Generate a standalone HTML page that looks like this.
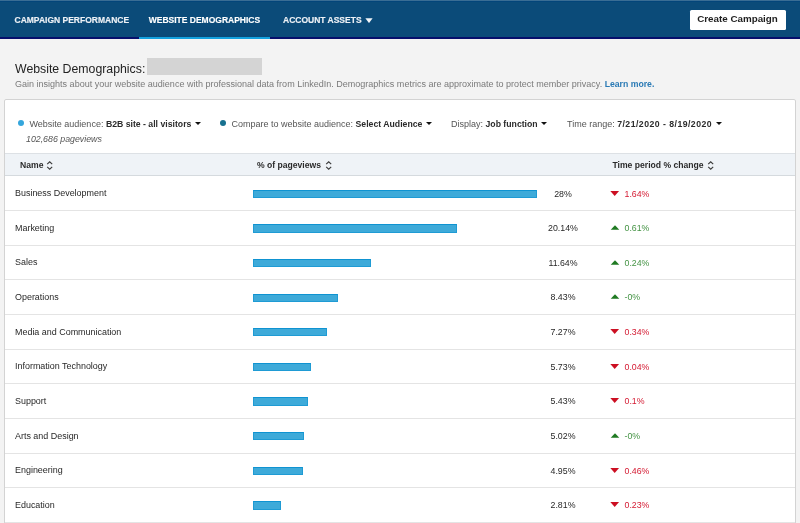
<!DOCTYPE html>
<html><head><meta charset="utf-8">
<style>
*{margin:0;padding:0;box-sizing:border-box}
html,body{width:800px;height:523px;overflow:hidden;background:#f3f3f3;-webkit-font-smoothing:antialiased;font-family:"Liberation Sans",sans-serif;color:#2b2b2b}
.nav{position:absolute;left:0;top:0;width:800px;height:39px;background:#0b4b79}
.nav .tl{position:absolute;left:0;top:0;width:800px;height:1px;background:#3a6d94}
.nav .tl2{position:absolute;left:0;top:1px;width:800px;height:1.2px;background:#03457a}
.nav .line{position:absolute;left:0;top:37.3px;width:800px;height:1.8px;background:#060f6c}
.nav .act{position:absolute;left:139px;top:37.1px;width:131px;height:2.2px;background:#14a2df}
.tab{position:absolute;top:15px;font-size:8.5px;font-weight:bold;color:#edf1f6;white-space:nowrap;letter-spacing:0;-webkit-text-stroke:0.15px currentColor}
.tri{display:inline-block;width:0;height:0;border-left:3.5px solid transparent;border-right:3.5px solid transparent;border-top:3.9px solid currentColor;vertical-align:middle;position:relative;top:-0.7px;margin-left:1.3px}
.dt{letter-spacing:0.47px}
.btn{position:absolute;left:689.5px;top:10px;width:96px;height:19.8px;background:#fff;border-radius:1.5px;font-size:9.8px;font-weight:bold;color:#1e1e1e;text-align:center;line-height:18.6px;white-space:nowrap}
.title{position:absolute;left:15px;top:61.5px;font-size:12.3px;color:#222;white-space:nowrap}
.gbox{position:absolute;left:147px;top:58.4px;width:115px;height:17px;background:#d4d4d4}
.sub{position:absolute;left:15px;top:79px;font-size:9.02px;color:#7a7a7a;white-space:nowrap}
.sub b{color:#2a7ab5;font-size:8.7px}
.card{position:absolute;left:4px;top:99px;width:792px;height:440px;background:#fff;border:1px solid #d3d3d3;border-radius:2px}
.f{position:absolute;top:118.5px;font-size:9px;color:#555;white-space:nowrap}
.f b{color:#2b2b2b;font-size:8.7px}
.dot{position:absolute;width:6.2px;height:6.2px;border-radius:50%}
.pv{position:absolute;left:26px;top:133.8px;font-size:8.8px;font-style:italic;color:#555;white-space:nowrap}
.th{position:absolute;left:5px;top:153px;width:790px;height:23px;background:#eff3f7;border-top:1px solid #dde1e5;border-bottom:1px solid #d5dade}
.h{position:absolute;top:160px;font-size:8.6px;font-weight:bold;color:#2b2b2b;white-space:nowrap}
.srt{position:absolute;top:160.4px}
.row{position:absolute;left:5px;width:790px;height:34.64px;border-bottom:1.5px solid #e4e4e4}
.nm{position:absolute;left:10px;top:11.7px;font-size:8.95px;color:#282828;white-space:nowrap}
.bar{position:absolute;left:247.8px;top:13.1px;height:8.3px;background:#3eaad9;border:1px solid #1f9bd4;border-top-color:#0f93d1}
.pc{position:absolute;left:508px;width:100px;text-align:center;top:12px;font-size:8.8px;color:#282828;white-space:nowrap}
.ch{position:absolute;left:619.5px;top:12px;font-size:8.8px;white-space:nowrap}
.dn{color:#d41a32}
.up{color:#449344}
.ti{position:absolute;left:605px;top:14px}
</style></head><body><div id="root" style="position:absolute;left:0;top:0;width:800px;height:523px;will-change:transform">
<div class="nav">
  <div class="tl"></div><div class="tl2"></div><div class="line"></div>
  <div class="act"></div>
  <div class="tab" style="left:14.5px">CAMPAIGN PERFORMANCE</div>
  <div class="tab" style="left:148.7px;color:#fff">WEBSITE DEMOGRAPHICS</div>
  <div class="tab" style="left:283px">ACCOUNT ASSETS</div>
  <svg style="position:absolute;left:365.4px;top:17.9px" width="8" height="5.5" viewBox="0 0 8 5.5"><path d="M0.4 0.3 L7.6 0.3 L4 5.1 Z" fill="#f2f5f8"/></svg>
  <div class="btn">Create Campaign</div>
</div>
<div class="title">Website Demographics:</div>
<div class="gbox"></div>
<div class="sub">Gain insights about your website audience with professional data from LinkedIn. Demographics metrics are approximate to protect member privacy. <b>Learn more.</b></div>
<div class="card"></div>
<div class="dot" style="left:18.15px;top:120.15px;background:#35a6dc"></div>
<div class="f" style="left:29.5px">Website audience: <b>B2B site - all visitors</b> <span class="tri" style="color:#111"></span></div>
<div class="dot" style="left:220px;top:120.15px;background:#17708f"></div>
<div class="f" style="left:231.5px">Compare to website audience: <b>Select Audience</b> <span class="tri" style="color:#111"></span></div>
<div class="f" style="left:451px">Display: <b>Job function</b> <span class="tri" style="color:#111"></span></div>
<div class="f" style="left:567px">Time range: <b class="dt">7/21/2020 - 8/19/2020</b> <span class="tri" style="color:#111"></span></div>
<div class="pv">102,686 pageviews</div>
<div class="th"></div>
<div class="h" style="left:20px">Name</div>
<div class="h" style="left:257px">% of pageviews</div>
<div class="h" style="left:612.5px">Time period % change</div>
<svg class="srt" style="left:46.2px" width="8" height="10" viewBox="0 0 8 10"><path d="M1.2 4.1 L3.7 1.9 L6.2 4.1 M1.2 6.9 L3.7 9.1 L6.2 6.9" fill="none" stroke="#3c3c3c" stroke-width="1.2"/></svg><svg class="srt" style="left:324.8px" width="8" height="10" viewBox="0 0 8 10"><path d="M1.2 4.1 L3.7 1.9 L6.2 4.1 M1.2 6.9 L3.7 9.1 L6.2 6.9" fill="none" stroke="#3c3c3c" stroke-width="1.2"/></svg><svg class="srt" style="left:707px" width="8" height="10" viewBox="0 0 8 10"><path d="M1.2 4.1 L3.7 1.9 L6.2 4.1 M1.2 6.9 L3.7 9.1 L6.2 6.9" fill="none" stroke="#3c3c3c" stroke-width="1.2"/></svg>
<div class="row" style="top:176.50px"><div class="nm">Business Development</div><div class="bar" style="width:284.2px"></div><div class="pc">28%</div><svg class="ti" width="12" height="8" viewBox="0 0 12 8"><path d="M0.3 0.1 L9.1 0.1 L4.7 4.9 Z" fill="#cc0f22"/></svg><div class="ch dn">1.64%</div></div>
<div class="row" style="top:211.14px"><div class="nm">Marketing</div><div class="bar" style="width:204.4px"></div><div class="pc">20.14%</div><svg class="ti" width="12" height="8" viewBox="0 0 12 8"><path d="M0.7 4.7 L9.3 4.7 L5 0.2 Z" fill="#1f7a22"/></svg><div class="ch up">0.61%</div></div>
<div class="row" style="top:245.78px"><div class="nm">Sales</div><div class="bar" style="width:118.1px"></div><div class="pc">11.64%</div><svg class="ti" width="12" height="8" viewBox="0 0 12 8"><path d="M0.7 4.7 L9.3 4.7 L5 0.2 Z" fill="#1f7a22"/></svg><div class="ch up">0.24%</div></div>
<div class="row" style="top:280.42px"><div class="nm">Operations</div><div class="bar" style="width:85.6px"></div><div class="pc">8.43%</div><svg class="ti" width="12" height="8" viewBox="0 0 12 8"><path d="M0.7 4.7 L9.3 4.7 L5 0.2 Z" fill="#1f7a22"/></svg><div class="ch up">-0%</div></div>
<div class="row" style="top:315.06px"><div class="nm">Media and Communication</div><div class="bar" style="width:73.8px"></div><div class="pc">7.27%</div><svg class="ti" width="12" height="8" viewBox="0 0 12 8"><path d="M0.3 0.1 L9.1 0.1 L4.7 4.9 Z" fill="#cc0f22"/></svg><div class="ch dn">0.34%</div></div>
<div class="row" style="top:349.70px"><div class="nm">Information Technology</div><div class="bar" style="width:58.2px"></div><div class="pc">5.73%</div><svg class="ti" width="12" height="8" viewBox="0 0 12 8"><path d="M0.3 0.1 L9.1 0.1 L4.7 4.9 Z" fill="#cc0f22"/></svg><div class="ch dn">0.04%</div></div>
<div class="row" style="top:384.34px"><div class="nm">Support</div><div class="bar" style="width:55.1px"></div><div class="pc">5.43%</div><svg class="ti" width="12" height="8" viewBox="0 0 12 8"><path d="M0.3 0.1 L9.1 0.1 L4.7 4.9 Z" fill="#cc0f22"/></svg><div class="ch dn">0.1%</div></div>
<div class="row" style="top:418.98px"><div class="nm">Arts and Design</div><div class="bar" style="width:51.0px"></div><div class="pc">5.02%</div><svg class="ti" width="12" height="8" viewBox="0 0 12 8"><path d="M0.7 4.7 L9.3 4.7 L5 0.2 Z" fill="#1f7a22"/></svg><div class="ch up">-0%</div></div>
<div class="row" style="top:453.62px"><div class="nm">Engineering</div><div class="bar" style="width:50.2px"></div><div class="pc">4.95%</div><svg class="ti" width="12" height="8" viewBox="0 0 12 8"><path d="M0.3 0.1 L9.1 0.1 L4.7 4.9 Z" fill="#cc0f22"/></svg><div class="ch dn">0.46%</div></div>
<div class="row" style="top:488.26px"><div class="nm">Education</div><div class="bar" style="width:28.5px"></div><div class="pc">2.81%</div><svg class="ti" width="12" height="8" viewBox="0 0 12 8"><path d="M0.3 0.1 L9.1 0.1 L4.7 4.9 Z" fill="#cc0f22"/></svg><div class="ch dn">0.23%</div></div>
</div></body></html>
